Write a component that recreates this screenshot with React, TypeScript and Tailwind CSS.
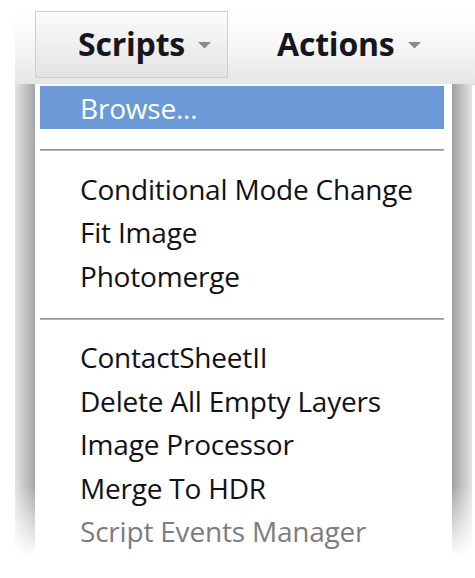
import React from "react";

const groups: { label: string; disabled?: boolean }[][] = [
    [{ label: "Conditional Mode Change" }, { label: "Fit Image" }, { label: "Photomerge" }],
    [
        { label: "ContactSheetII" },
        { label: "Delete All Empty Layers" },
        { label: "Image Processor" },
        { label: "Merge To HDR" },
        { label: "Script Events Manager", disabled: true },
    ],
];

const Caret = () => (
    <svg width="13" height="7" viewBox="0 0 13 7" className="ml-[13px] mt-[4px]">
        <path d="M0 0 L13 0 L6.5 6.5 Z" fill="#8a8a8a" />
    </svg>
);

const Separator = () => (
    <div className="pt-[20px] pb-[16px]">
        <div className="h-[2px] bg-gradient-to-b from-[#8e8e8e] to-[#bdbdbd]" />
    </div>
);

const App: React.FC = () => {
    return (
        <div
            className="w-[475px] h-[578px] bg-white overflow-hidden"
            style={{ fontFamily: '"Open Sans", "Noto Sans", sans-serif' }}
        >
            {/* toolbar */}
            <div className="mt-[11px] h-[74px] flex bg-gradient-to-b from-white via-[#f6f6f6] to-[#e6e6e6] border-b border-[#d6d6d6] ml-[15px]">
                <div className="w-[20px]" />
                <button className="w-[193px] h-[67px] flex items-center pl-[42px] pb-[2px] border border-[#cfcfcf] bg-gradient-to-b from-[#fbfbfb] to-[#e3e3e3]">
                    <span className="text-[32px] font-bold text-[#16161e] tracking-[-0.2px]">Scripts</span>
                    <Caret />
                </button>
                <button className="w-[220px] h-[67px] flex items-center pl-[49px] pb-[2px]">
                    <span className="text-[32px] font-bold text-[#16161e] tracking-[-0.2px]">Actions</span>
                    <Caret />
                </button>
            </div>

            {/* menu with side shadows */}
            <div className="flex ml-[15px] -mt-[1px]">
                <div className="w-[20px] h-[472px] bg-gradient-to-r from-[#e4e4e4] to-[#a6a6a6] [mask-image:linear-gradient(to_bottom,black_85%,transparent)]" />
                <div className="w-[417px] bg-white pl-[5px] pr-[8px] pt-[2px] pb-[6px]">
                    <div className="h-[43px] bg-[#6b9ad6] flex items-center pl-[40px] text-[28px] tracking-[-0.2px] text-white">
                        Browse...
                    </div>
                    {groups.map((items, gi) => (
                        <div key={gi}>
                            <Separator />
                            {items.map((it) => (
                                <div
                                    key={it.label}
                                    className={
                                        "h-[43.5px] flex items-center pl-[40px] text-[28px] tracking-[-0.2px] " +
                                        (it.disabled ? "text-[#7c7c84]" : "text-[#111118]")
                                    }
                                >
                                    {it.label}
                                </div>
                            ))}
                        </div>
                    ))}
                </div>
                <div className="w-[20px] h-[472px] bg-gradient-to-l from-[#e4e4e4] to-[#a0a0a0] [mask-image:linear-gradient(to_bottom,black_85%,transparent)]" />
            </div>
        </div>
    );
};

export default App;
